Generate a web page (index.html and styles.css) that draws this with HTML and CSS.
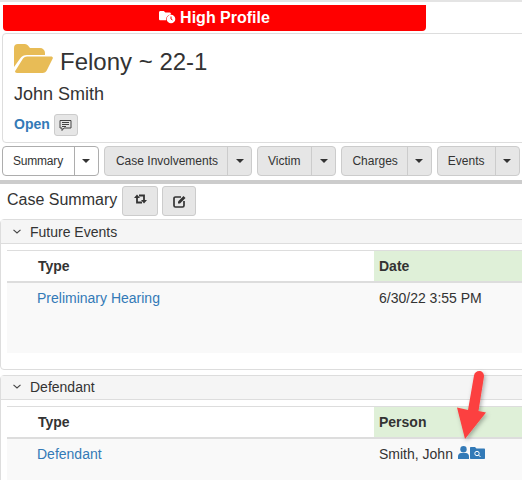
FILE: index.html
```html
<!DOCTYPE html>
<html lang="en">
<head>
<meta charset="utf-8">
<title>Felony ~ 22-1</title>
<link rel="stylesheet" href="styles.css">
</head>
<body>
<div class="page">
  <div class="banner">
    <svg class="banner-icon" width="17" height="13" viewBox="0 0 17 13"><path fill="#fff" d="M0 1.500C0 .7.600 0 1.400 0h3.400l1.600 1.600h4.200c.8 0 1.300.6 1.300 1.300v.6a5 5 0 0 0-4.700 5.800H1.400C.6 9.300 0 8.700 0 8z"/><circle cx="12" cy="8" r="4.300" fill="#fff"/><path stroke="#f00" stroke-width="1" fill="none" d="M12 5.500V8l1.500 1"/></svg>
    <span>High Profile</span>
  </div>
  <section class="case-card">
    <div class="case-title">
      <svg class="folder" width="39" height="29" viewBox="0 0 39 29"><path fill="#e8bc56" d="M0 4a4 4 0 0 1 4-4h7a4 4 0 0 1 3 1.500L16 4h10a5 5 0 0 1 5 5v2H13c-3 0-5 1-6.500 3L0 23z"/><path fill="#e8bc56" d="M9 14.500c1-1.300 2.500-2 4-2h24c1.500 0 2.300 1 1.600 2.300L33 26c-.9 1.800-2.300 3-4.500 3H3c-1.800 0-2.500-1.300-1.500-2.600z"/></svg>
      <h1>Felony ~ 22-1</h1>
    </div>
    <div class="case-person">John Smith</div>
    <div class="case-status">
      <strong class="status">Open</strong>
      <button class="note-btn" type="button" aria-label="Notes">
        <svg width="13" height="13" viewBox="0 0 13 13"><path fill="none" stroke="#444" d="M1 1.500h11v7.500H5L3 11.500V9H1z"/><path stroke="#444" d="M3 3.500h7M3 5.500h7M3 7.500h4"/></svg>
      </button>
    </div>
  </section>
  <nav class="tabs">
    <div class="tab active"><span class="tab-label">Summary</span><span class="tab-caret"><i></i></span></div>
    <div class="tab involvements"><span class="tab-label">Case Involvements</span><span class="tab-caret"><i></i></span></div>
    <div class="tab victim"><span class="tab-label">Victim</span><span class="tab-caret"><i></i></span></div>
    <div class="tab charges"><span class="tab-label">Charges</span><span class="tab-caret"><i></i></span></div>
    <div class="tab"><span class="tab-label">Events</span><span class="tab-caret"><i></i></span></div>
  </nav>
  <div class="rule"></div>
  <div class="summary-head">
    <h2>Case Summary</h2>
    <button class="tool-btn swap" type="button" aria-label="Switch">
      <svg width="13" height="10" viewBox="0 0 13 10"><path fill="none" stroke="#333" stroke-width="1.800" d="M3 3V8.500h5M10 7V1.500H5"/><path fill="#333" d="M0 4 3 .5 6 4zM7 6l3 3.500L13 6z"/></svg>
    </button>
    <button class="tool-btn edit" type="button" aria-label="Edit">
      <svg width="13" height="13" viewBox="0 0 13 13"><path fill="none" stroke="#333" stroke-width="1.700" d="M8 2H2.500C1.600 2 1 2.600 1 3.500v7c0 .9.600 1.500 1.500 1.500h7c.9 0 1.500-.6 1.500-1.500V6"/><path fill="#333" d="M5 6.500 10.500 1 12.500 3 7 8.500H5z"/></svg>
    </button>
  </div>
  <section class="panel future">
    <header class="panel-head"><svg class="chev" width="8" height="5" viewBox="0 0 8 5"><path fill="none" stroke="#444" stroke-width="1.100" d="M.5.800 4 4 7.500.8"/></svg><span>Future Events</span></header>
    <div class="panel-body">
      <div class="grid-head"><div class="col-type">Type</div><div class="col-value">Date</div></div>
      <div class="grid-row"><div class="col-type"><a>Preliminary Hearing</a></div><div class="col-value">6/30/22 3:55 PM</div></div>
    </div>
  </section>
  <section class="panel defendant">
    <header class="panel-head"><svg class="chev" width="8" height="5" viewBox="0 0 8 5"><path fill="none" stroke="#444" stroke-width="1.100" d="M.5.800 4 4 7.500.8"/></svg><span>Defendant</span></header>
    <div class="panel-body">
      <div class="grid-head"><div class="col-type">Type</div><div class="col-value">Person</div></div>
      <div class="grid-row"><div class="col-type"><a>Defendant</a></div><div class="col-value person"><span>Smith, John</span><svg class="person-icon" width="11" height="13" viewBox="0 0 11 13"><circle cx="5.500" cy="3.200" r="3.200" fill="#337ab7"/><path fill="#337ab7" d="M0 13V10.500C0 8.300 1.500 7 3 7h5c1.500 0 3 1.300 3 3.500V13z"/></svg><svg class="case-icon" width="15" height="12" viewBox="0 0 15 12"><path fill="#337ab7" d="M0 1c0-.6.400-1 1-1h4l1.500 1.500H14c.6 0 1 .4 1 1V11c0 .6-.4 1-1 1H1c-.6 0-1-.4-1-1z"/><circle cx="7" cy="6.500" r="2.200" fill="none" stroke="#fff" stroke-width="1"/><path stroke="#fff" d="M8.500 8 10.500 10"/></svg></div></div>
    </div>
  </section>
  <svg class="arrow" width="50" height="84" viewBox="0 0 50 84">
    <defs><filter id="s" x="-30%" y="-30%" width="160%" height="160%"><feDropShadow dx="1.500" dy="2" stdDeviation="2" flood-color="#000" flood-opacity=".3"/></filter></defs>
    <path filter="url(#s)" fill="#fc4040" d="M24 10.500C25 4 34.500 4.500 34 11.500L28.500 46l7.500 1.500L15 74 7 42.500 18 45z"/>
  </svg>
</div>
</body>
</html>
```

FILE: styles.css
```css
* { box-sizing: border-box; }
html, body { margin: 0; padding: 0; background: #fff; }
body { font-family: "Liberation Sans", Arial, sans-serif; color: #333; font-size: 14px; overflow: hidden; }
.page { position: relative; width: 522px; height: 480px; overflow: hidden; border-top: 2px solid #e4e4e4; }
.banner {
  margin: 3px 0 0 3px; width: 423px; height: 26px; background: #f00; border-radius: 0 0 4px 4px;
  display: flex; align-items: center; justify-content: center; gap: 4px;
  color: #fff; font-weight: bold; font-size: 16px;
}
.banner-icon { margin-top: -2px; }
.case-card {
  margin: 2px -10px 0 2px; height: 110px; border: 1px solid #ddd; border-radius: 4px;
  padding: 10px 0 0 11px;
}
.case-title { display: flex; align-items: flex-start; gap: 7px; height: 41px; }
h1 { margin: 3px 0 0; font-size: 24px; font-weight: normal; line-height: 30px; }
.case-person { font-size: 18px; line-height: 22px; margin-top: -2px; }
.case-status { display: flex; align-items: center; gap: 4px; margin-top: 9px; }
.status { color: #337ab7; font-size: 14px; margin-top: -2px; }
.note-btn, .tool-btn {
  display: flex; align-items: center; justify-content: center; padding: 0;
  background: #e6e6e6; border: 1px solid #ccc; border-radius: 3px;
}
.note-btn { width: 24px; height: 22px; }
.tabs { display: flex; gap: 5px; margin: 3px 0 0 2px; height: 30px; width: 540px; }
.tab { display: flex; height: 30px; background: #e6e6e6; border: 1px solid #ccc; border-radius: 4px; font-size: 12px; }
.tab.active { background: #fff; border-color: #adadad; }
.tab-label { display: flex; align-items: center; padding: 0 10px; }
.tab.active .tab-label { letter-spacing: -.2px; padding-right: 11px; }
.involvements .tab-label { padding: 0 9px 0 11px; }
.victim .tab-label { padding-right: 11px; }
.charges .tab-label { padding-right: 9px; }
.tab-caret { display: flex; align-items: center; justify-content: center; width: 24px; border-left: 1px solid #ccc; }
.tab.active .tab-caret { border-left-color: #adadad; }
.tab-caret i { width: 0; height: 0; border-left: 4px solid transparent; border-right: 4px solid transparent; border-top: 4px solid #333; }
.rule { height: 4px; margin-top: 4px; background: #ccc; }
.summary-head { display: flex; align-items: flex-start; height: 34px; padding: 2px 0 0 7px; }
h2 { margin: 0 5px 0 0; font-size: 16px; font-weight: normal; line-height: 28px; }
.tool-btn { height: 30px; }
.swap { width: 36px; margin-right: 4px; padding-bottom: 4px; }
.edit { width: 34px; }
.panel { margin: 0 -10px 0 0; border: 1px solid #ddd; border-radius: 4px; }
.panel.future { height: 151px; margin-top: 1px; }
.panel.defendant { margin-top: 5px; height: 140px; }
.panel-head { display: flex; align-items: center; height: 24px; background: #f5f5f5; border-bottom: 1px solid #ddd; font-size: 14px; padding-left: 12px; gap: 9px; }
.defendant .panel-head { padding-bottom: 2px; }
.panel-body { padding: 6px 0 0 6px; }
.grid-head { display: flex; height: 33px; border-top: 1px solid #ddd; border-bottom: 2px solid #ddd; font-weight: bold; }
.grid-row { display: flex; height: 70px; background: #f9f9f9; }
.col-type { width: 367px; padding: 7px 0 0 30px; }
.grid-head .col-type { padding: 7px 0 0 31px; }
.col-value { flex: 1; padding: 7px 0 0 5px; }
.grid-head .col-value { background: #dff0d8; padding-top: 7px; }
a { color: #337ab7; }
.person { display: flex; align-items: flex-start; }
.person-icon { margin: 0 0 0 5px; }
.case-icon { margin: 1px 0 0 1px; }
.arrow { position: absolute; left: 450px; top: 363px; }
```
